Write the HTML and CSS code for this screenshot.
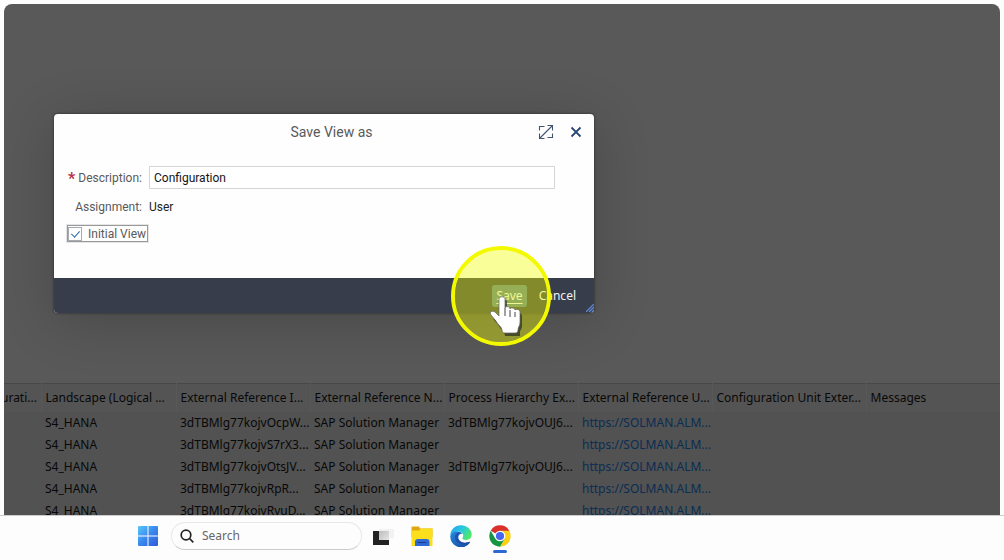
FILE: index.html
```html
<!DOCTYPE html>
<html lang="en">
<head>
<meta charset="utf-8">
<meta name="viewport" content="width=device-width, initial-scale=1">
<title>Save View as</title>
<link rel="stylesheet" href="styles.css">
</head>
<body>
<main class="screen">
  <div class="grid">
    <table class="units">
      <colgroup>
        <col class="c-first"><col class="c-land"><col class="c-ref"><col class="c-ref"><col class="c-ref"><col class="c-ref"><col class="c-unit"><col>
      </colgroup>
      <thead>
        <tr><th class="cut">urati...</th><th>Landscape (Logical ...</th><th>External Reference I...</th><th>External Reference N...</th><th>Process Hierarchy Ex...</th><th>External Reference U...</th><th>Configuration Unit Exter...</th><th>Messages</th></tr>
      </thead>
      <tbody>
        <tr><td></td><td>S4_HANA</td><td>3dTBMlg77kojvOcpW...</td><td>SAP Solution Manager</td><td>3dTBMlg77kojvOUJ6...</td><td><a href="#">https://SOLMAN.ALM...</a></td><td></td><td></td></tr>
        <tr><td></td><td>S4_HANA</td><td>3dTBMlg77kojvS7rX3...</td><td>SAP Solution Manager</td><td></td><td><a href="#">https://SOLMAN.ALM...</a></td><td></td><td></td></tr>
        <tr><td></td><td>S4_HANA</td><td>3dTBMlg77kojvOtsJV...</td><td>SAP Solution Manager</td><td>3dTBMlg77kojvOUJ6...</td><td><a href="#">https://SOLMAN.ALM...</a></td><td></td><td></td></tr>
        <tr><td></td><td>S4_HANA</td><td>3dTBMlg77kojvRpR...</td><td>SAP Solution Manager</td><td></td><td><a href="#">https://SOLMAN.ALM...</a></td><td></td><td></td></tr>
        <tr><td></td><td>S4_HANA</td><td>3dTBMlg77kojvRvuD...</td><td>SAP Solution Manager</td><td></td><td><a href="#">https://SOLMAN.ALM...</a></td><td></td><td></td></tr>
      </tbody>
    </table>
  </div>

  <form class="dialog" role="dialog" aria-labelledby="dialog-title">
    <header class="dialog-head">
      <h1 id="dialog-title" class="dialog-title">Save View as</h1>
      <button type="button" class="icon-btn" aria-label="Maximize">
        <svg width="16" height="16" viewBox="0 0 16 16" fill="none" stroke="#40546f" stroke-width="1.1"><path d="M2 14 14 2M9.500 1.500h5v5M1.500 9.500v5h5M1.500 6.500v-4h5M14.500 9.500v4h-5"/></svg>
      </button>
      <button type="button" class="icon-btn" aria-label="Close">
        <svg width="16" height="16" viewBox="0 0 16 16" fill="none" stroke="#2b4775" stroke-width="1.800"><path d="M3.500 3.500l9 9M12.500 3.500l-9 9"/></svg>
      </button>
    </header>
    <div class="dialog-body">
      <div class="field">
        <label class="field-label" for="description"><span class="required">*</span> Description:</label>
        <input class="field-input" id="description" type="text" value="Configuration">
      </div>
      <div class="field">
        <span class="field-label">Assignment:</span>
        <span class="field-value">User</span>
      </div>
      <label class="check" for="initial"><input class="check-box" id="initial" type="checkbox" checked>Initial View</label>
    </div>
    <footer class="dialog-foot">
      <button type="button" class="action action-save">Save</button>
      <button type="button" class="action">Cancel</button>
      <svg class="grip" width="8" height="8" viewBox="0 0 8 8" fill="none" stroke="#5f84d0" stroke-width="1.300"><path d="M0 8 8 0M3 8l5-5M6 8l2-2"/></svg>
    </footer>
    <div class="halo"></div>
    <svg class="pointer" width="38" height="44" viewBox="0 0 38 44">
      <path d="M11 4c0-4 5-4 5 0v10c1-3 5-2 5 1 1-2 5-2 5 1 1-2 5-1 5 2v10c0 3-2 4-2 6v4H14c0-4-4-6-6-10l-5-6c-2-3 1-5 4-3l4 4z" fill="#222" opacity=".65" transform="translate(2 2)"/>
      <path d="M10 3c0-3 6-3 6 0v9c1-2 5-2 5 1 1-2 5-1 5 1 1-1 5-1 5 2v10c0 4-2 5-2 8 0 2-1 3-3 3H16c-2 0-3-1-3-3 0-3-4-5-6-9l-5-6c-2-3 1-5 4-3l4 4z" fill="#fff" stroke="#666" stroke-width=".7"/>
      <path d="M16 12v8M21 14v7M26 16v5" fill="none" stroke="#444" stroke-width="1"/>
    </svg>
  </form>
</main>

<nav class="taskbar" aria-label="Taskbar">
  <button type="button" class="app" aria-label="Start">
    <svg width="22" height="22" viewBox="0 0 22 22"><defs><linearGradient id="win" x1="0" y1="0" x2="22" y2="22" gradientUnits="userSpaceOnUse"><stop stop-color="#5bcdfb"/><stop offset=".5" stop-color="#3a87ee"/><stop offset="1" stop-color="#2f55d6"/></linearGradient></defs><path fill="url(#win)" d="M2 1h8.500v9.500H1V2a1 1 0 0 1 1-1zM11.500 1H20a1 1 0 0 1 1 1v8.500h-9.500zM1 11.500h9.500V21H2a1 1 0 0 1-1-1zM11.500 11.500H21V20a1 1 0 0 1-1 1h-8.500z"/></svg>
  </button>
  <div class="search">
    <svg width="14" height="14" viewBox="0 0 14 14" fill="none" stroke="#242424" stroke-width="1.700"><circle cx="6" cy="6" r="4.800"/><path d="m9.500 9.500 3.800 3.800"/></svg>
    <input class="search-input" type="search" placeholder="Search" aria-label="Search">
  </div>
  <button type="button" class="app" aria-label="Task view">
    <svg width="22" height="22" viewBox="0 0 22 22"><defs><linearGradient id="tv" x2="1" y2="1"><stop stop-color="#bbb"/><stop offset="1" stop-color="#e6e6e6"/></linearGradient></defs><path d="M1 6h16v14H1z" fill="#222"/><path d="M7 4h15v9.500H7z" fill="#f2f2f2"/><path d="M7 6h10v9H7z" fill="url(#tv)"/></svg>
  </button>
  <button type="button" class="app" aria-label="File Explorer">
    <svg width="22" height="22" viewBox="0 0 22 22"><path d="M.5 2.500A1 1 0 0 1 1.500 1.500H8l1 2h12.500V12H.500z" fill="#e0a712"/><path d="M.5 5.500H8l2-2h11.500V21H.500z" fill="#fbdf1c"/><path d="M4 21v-4a3 3 0 0 1 3-3h8.500a3 3 0 0 1 3 3v4z" fill="#2f69d4"/><path d="M6.500 17.500h9" stroke="#143e8c"/></svg>
  </button>
  <button type="button" class="app" aria-label="Edge">
    <svg width="22" height="22" viewBox="0 0 22 22"><defs><linearGradient id="ea" x1="0" y1="0" x2="1" y2=".5"><stop stop-color="#2a9be6"/><stop offset=".5" stop-color="#25c6e5"/><stop offset="1" stop-color="#4ee86a"/></linearGradient><linearGradient id="eb" x1="0" y1="0" x2="1" y2="1"><stop stop-color="#2289df"/><stop offset="1" stop-color="#17479f"/></linearGradient></defs><path d="M.3 11C.300 4.500 5 .3 11 .3s10.700 4.400 10.700 9c0 3.600-2.500 5.700-5.600 5.700-2.600 0-3.900-1-3.600-2 .4-1 .9-1.500.7-3C12.900 8 11 6.300 8 6.500 4 6.700 1 8.500.3 11z" fill="url(#ea)"/><path d="M.3 11C1 7.500 4.500 6 8 6.500c2 .3 3.700 1.200 4.500 2.200-2.500-.3-4.200 1.300-4.200 3.600 0 3.800 4.500 6.500 9 5 .9-.3 1.900-.7 2.400-.5.500.200.300.7 0 1.100A10.700 10.700 0 0 1 .3 11z" fill="url(#eb)"/><path d="M5 12c0-3 2.500-5 6-4.300-2 .5-3.200 2-3.200 4.400 0 4.500 5.700 7.300 11 4.900-2.500 3.500-13.800 3.500-13.800-5z" fill="#2448a6" opacity=".8"/></svg>
  </button>
  <button type="button" class="app app-active" aria-label="Chrome">
    <svg width="22" height="22" viewBox="0 0 22 22"><path d="M11 11 1.700 5.700A10.700 10.700 0 0 1 20.300 5.700z" fill="#da2f2a"/><path d="M11 11V5.700h9.300A10.700 10.700 0 0 1 11 21.700l4.600-8z" fill="#fbd116"/><path d="M11 11l4.600 2.700-4.600 8A10.700 10.700 0 0 1 1.700 5.700l4.700 8z" fill="#159443"/><circle cx="11" cy="11" r="5.300" fill="#fff"/><circle cx="11" cy="11" r="4.100" fill="#4763ef"/></svg>
  </button>
</nav>
</body>
</html>
```
FILE: styles.css
```css
* { box-sizing: border-box; }

body {
  margin: 0;
  min-height: 100vh;
  display: flex;
  flex-direction: column;
  padding: 4px 4px 0;
  background: #fdfdfe;
  font-family: Roboto, "Noto Sans", sans-serif;
  font-size: 12px;
  color: #080808;
}

button, input { font: inherit; }

button {
  border: 0;
  padding: 0;
  background: none;
}

.screen {
  flex: 1;
  min-height: 0;
  position: relative;
  display: flex;
  flex-direction: column;
  justify-content: flex-end;
  overflow: hidden;
  border-radius: 8px 8px 0 0;
  background: #595959;
}

.grid {
  height: 132px;
  overflow: hidden;
  background: #525252;
  font-family: "Noto Sans", "Open Sans", sans-serif;
}

.units {
  width: 100%;
  table-layout: fixed;
  border-collapse: collapse;
}

.c-first { width: 37px; }
.c-land { width: 135px; }
.c-ref { width: 134px; }
.c-unit { width: 154px; }

.units th, .units td {
  padding: 0 0 0 4px;
  height: 22px;
  line-height: 22px;
  text-align: left;
  font-weight: 400;
  white-space: nowrap;
  overflow: hidden;
}

.units th {
  height: 28px;
  line-height: 28px;
  border-right: 1px solid #585858;
  border-top: 1px solid #484848;
  background: #545454;
}

.units th:last-child { border-right: 0; }
.units .cut { padding-left: 0; text-indent: -3px; }
.units a { color: #0a2d52; text-decoration: none; }

.dialog {
  position: absolute;
  top: 110px;
  left: 50px;
  width: 540px;
  display: flex;
  flex-direction: column;
  border-radius: 4px;
  background: #fefefe;
  box-shadow: 0 0 3px rgba(0, 0, 0, .5), 0 8px 56px rgba(0, 0, 0, .2);
  color: #5a5a5a;
}

.dialog-head {
  display: grid;
  grid-template-columns: 1fr 16px 16px;
  column-gap: 14px;
  align-items: center;
  height: 36px;
  padding: 0 10px;
}

.dialog-title {
  margin: 0;
  padding-left: 75px;
  text-align: center;
  font-size: 14px;
  font-weight: 400;
}

.icon-btn { display: flex; }

.dialog-body {
  display: flex;
  flex-direction: column;
  align-items: flex-start;
  gap: 9px;
  padding: 16px 39px 36px 13px;
}

.field {
  display: flex;
  align-items: center;
  gap: 7px;
  width: 100%;
}

.field-label {
  width: 75px;
  text-align: right;
  white-space: nowrap;
  line-height: 16px;
}

.required {
  color: #b8304a;
  font-size: 16px;
  font-weight: 700;
  line-height: 12px;
  vertical-align: -2px;
}

.field-input {
  flex: 1;
  min-width: 0;
  height: 23px;
  padding: 0 4px;
  border: 1px solid #d3d5d7;
  background: #fff;
  color: #151515;
}

.field-value {
  line-height: 18px;
  color: #222;
}

.check {
  display: flex;
  align-items: center;
  gap: 6px;
  height: 17px;
  padding: 0 1px 0 0;
  border: 1px solid #999;
  outline: 1px solid #e5e5e5;
  line-height: 14px;
}

.check-box {
  appearance: none;
  width: 14px;
  height: 14px;
  margin: 0;
  border: 1px solid #a6abb4;
  background: #fff;
  display: grid;
  place-items: center;
}

.check-box:checked::before {
  content: "";
  width: 4px;
  height: 7px;
  margin-bottom: 2px;
  border: solid #2f68ad;
  border-width: 0 1px 1px 0;
  transform: rotate(42deg);
}

.dialog-foot {
  position: relative;
  display: flex;
  justify-content: flex-end;
  align-items: center;
  gap: 4px;
  height: 35px;
  padding: 0 10px;
  border-radius: 0 0 4px 4px;
  background: #373d4a;
  font-family: "Noto Sans", "Open Sans", sans-serif;
}

.action {
  height: 22px;
  padding: 0 8px;
  border-radius: 3px;
  color: #eef1f5;
}

.action-save {
  padding: 0 4px;
  background: #587b90;
  text-decoration: underline;
  text-underline-offset: 3px;
}

.grip {
  position: absolute;
  right: 0;
  bottom: 1px;
}

.halo {
  position: absolute;
  top: 132px;
  left: 397px;
  width: 100px;
  height: 100px;
  border: 4px solid #f3fa00;
  border-radius: 50%;
  background: rgba(244, 255, 0, .4);
  background-clip: padding-box;
  pointer-events: none;
}

.pointer {
  position: absolute;
  top: 182px;
  left: 435px;
  pointer-events: none;
}

.taskbar {
  display: flex;
  align-items: center;
  gap: 17px;
  height: 45px;
  margin: 0 -4px;
  padding: 0 137px 5px;
  border-top: 1px solid #ccc;
}

.app {
  display: flex;
  flex: none;
}

.search {
  display: flex;
  align-items: center;
  gap: 8px;
  width: 191px;
  height: 28px;
  margin: 0 -7px 0 -5px;
  padding: 0 8px;
  border: 1px solid #e8e8e8;
  border-bottom-color: #ccc;
  border-radius: 14px;
  font-family: "Noto Sans", sans-serif;
}

.search-input {
  flex: 1;
  min-width: 0;
  padding: 0;
  border: 0;
  background: none;
}

.search-input::placeholder { color: #666; }

.app-active { position: relative; }

.app-active::after {
  content: "";
  position: absolute;
  bottom: -6px;
  left: 4px;
  width: 14px;
  height: 3px;
  border-radius: 2px;
  background: #2e68d0;
}
```
